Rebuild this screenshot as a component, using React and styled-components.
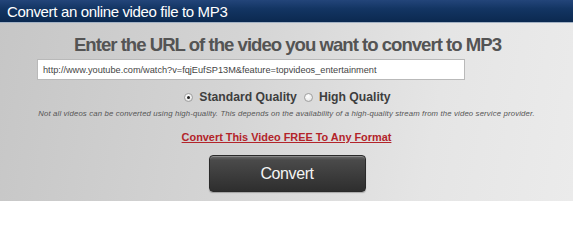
import React from "react";
import styled, { createGlobalStyle } from "styled-components";

const GlobalStyle = createGlobalStyle`
  html, body {
    margin: 0;
    padding: 0;
    width: 573px;
    height: 201px;
    overflow: hidden;
    font-family: "Liberation Sans", Arial, sans-serif;
  }
`;

const Panel = styled.div`
  width: 573px;
  height: 201px;
  display: flex;
  flex-direction: column;
  background: linear-gradient(100deg, #c6c6c6 0%, #d4d4d4 40%, #e5e5e5 75%, #ebebeb 100%);
`;

const Header = styled.div`
  height: 22px;
  flex: none;
  display: flex;
  align-items: center;
  padding-left: 7px;
  background: linear-gradient(#23457a 0%, #133563 40%, #0b2950 100%);
  border-bottom: 1px solid #a3b2c4;
  color: #ffffff;
  font-size: 15px;
  letter-spacing: -0.35px;
`;

const Body = styled.div`
  display: flex;
  flex-direction: column;
  align-items: center;
`;

const Heading = styled.h1`
  margin: 10px 0 0 2px;
  font-size: 18.6px;
  font-weight: bold;
  color: #545454;
  line-height: 23px;
  letter-spacing: -1px;
`;

const UrlInput = styled.input`
  box-sizing: border-box;
  align-self: flex-start;
  width: 428px;
  height: 21px;
  margin: 3px 0 0 37px;
  padding: 0 5px;
  border: 1px solid #b9b9b9;
  background: #ffffff;
  font-family: "Liberation Sans", Arial, sans-serif;
  font-size: 9.2px;
  color: #444;
  outline: none;
`;

const Options = styled.div`
  display: flex;
  align-items: center;
  margin-top: 9px;
  height: 16px;
  margin-left: 2px;
`;

const Option = styled.label`
  display: flex;
  align-items: center;
  gap: 6px;
  margin-right: ${(p) => (p.$last ? "0" : "7px")};
  font-size: 12.2px;
  font-weight: bold;
  color: #3e3e3e;
`;

const Radio = styled.span`
  box-sizing: border-box;
  width: 9px;
  height: 9px;
  border-radius: 50%;
  background: radial-gradient(circle at 40% 35%, #ffffff 0%, #ececec 60%, #c8c8c8 100%);
  border: 1px solid #a0a0a0;
  display: flex;
  align-items: center;
  justify-content: center;
  &::after {
    content: "";
    width: 3px;
    height: 3px;
    border-radius: 50%;
    background: ${(p) => (p.$checked ? "#222" : "transparent")};
  }
`;

const Note = styled.p`
  margin: 4px 0 0;
  font-size: 7.75px;
  font-style: italic;
  color: #555;
  letter-spacing: 0.15px;
`;

const FormatLink = styled.a`
  margin-top: 13px;
  font-size: 10.9px;
  font-weight: bold;
  color: #b3242a;
  text-decoration: underline;
  cursor: pointer;
`;

const ConvertButton = styled.button`
  box-sizing: border-box;
  width: 157px;
  height: 37px;
  margin-top: 12px;
  margin-left: 1px;
  border-radius: 4px;
  border: 1px solid #2a2a2a;
  background: linear-gradient(#6a6a6a 0%, #4a4a4a 12%, #3c3c3c 55%, #2e2e2e 100%);
  box-shadow: inset 0 1px 0 #8a8a8a, 0 1px 1px rgba(0, 0, 0, 0.25);
  color: #f4f4f4;
  font-family: "Liberation Sans", Arial, sans-serif;
  font-size: 16px;
  letter-spacing: -0.4px;
  cursor: pointer;
`;

export default function App() {
  return (
    <>
      <GlobalStyle />
      <Panel>
        <Header>Convert an online video file to MP3</Header>
        <Body>
          <Heading>Enter the URL of the video you want to convert to MP3</Heading>
          <UrlInput
            type="text"
            defaultValue="http://www.youtube.com/watch?v=fqjEufSP13M&feature=topvideos_entertainment"
          />
          <Options>
            <Option>
              <Radio $checked />
              Standard Quality
            </Option>
            <Option $last>
              <Radio />
              High Quality
            </Option>
          </Options>
          <Note>
            Not all videos can be converted using high-quality. This depends on the
            availability of a high-quality stream from the video service provider.
          </Note>
          <FormatLink>Convert This Video FREE To Any Format</FormatLink>
          <ConvertButton>Convert</ConvertButton>
        </Body>
      </Panel>
    </>
  );
}
